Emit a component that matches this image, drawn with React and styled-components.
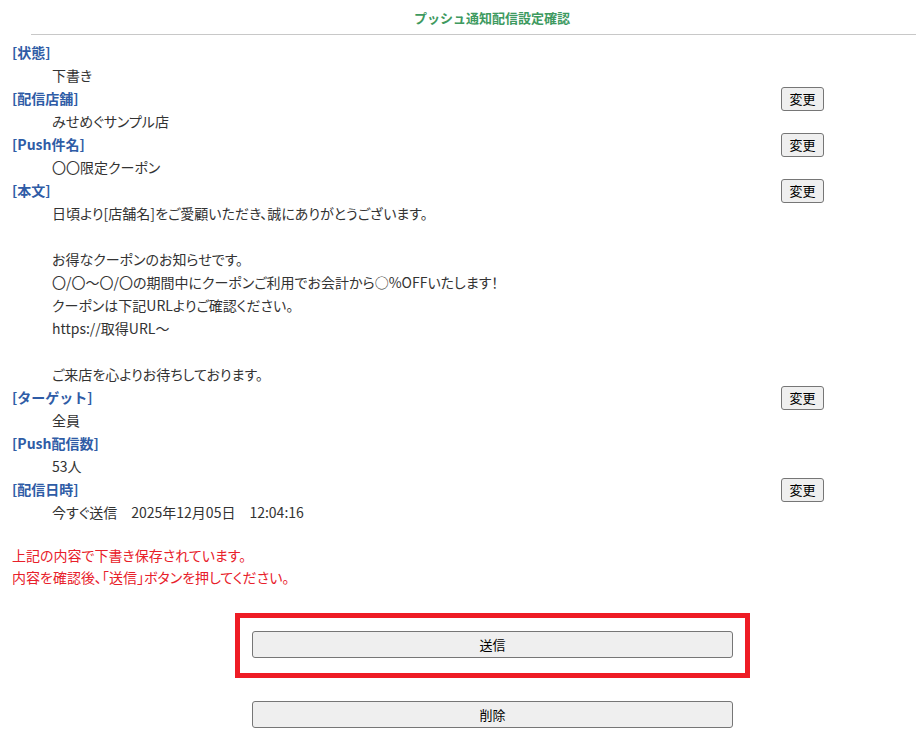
import styled, { createGlobalStyle } from "styled-components";

const GlobalStyle = createGlobalStyle`
  body {
    margin: 0;
    background: #fff;
    font-family: "Noto Sans CJK JP", "Noto Sans", sans-serif;
    color: #333;
  }
`;

// 画面タイトル
const Header = styled.div`
  margin: 0 0 6px 31px;
  padding: 8px 0 6px 37px;
  border-bottom: 1px solid #c8c8c8;
  text-align: center;
  font-size: 13px;
  font-weight: bold;
  line-height: 20px;
  color: #3e9a5f;
`;

const List = styled.div`
  width: 812px;
  padding: 0 12px;
  font-size: 14px;
  line-height: 23px;
`;

const LabelRow = styled.div`
  display: flex;
  align-items: center;
  justify-content: space-between;
  height: 23px;
`;

const Label = styled.div`
  font-weight: bold;
  color: #2f5ca6;
`;

const Value = styled.div`
  padding-left: 40px;
  white-space: pre-wrap;
  min-height: 23px;
  font-feature-settings: "palt";
`;

const SmallButton = styled.button`
  width: 43px;
  height: 24px;
  padding: 0;
  font-family: inherit;
  font-size: 13px;
  color: #000;
  background: #efefef;
  border: 1px solid #767676;
  border-radius: 3px;
`;

const Notice = styled.p`
  margin: 20px 12px 0;
  font-size: 14px;
  line-height: 22px;
  color: #e8202a;
  font-feature-settings: "palt";
`;

// 送信ボタンを囲む赤い枠
const Highlight = styled.div`
  width: 481px;
  margin: 25px 0 0 235px;
  padding: 13px 12px 15px;
  border: 5px solid #ee1c25;
`;

const WideButton = styled.button`
  display: block;
  width: 481px;
  height: 27px;
  margin-left: ${(p) => (p.$offset ? "252px" : "0")};
  margin-top: ${(p) => (p.$offset ? "23px" : "0")};
  padding: 0;
  font-family: inherit;
  font-size: 13px;
  color: #000;
  background: #efefef;
  border: 1px solid #767676;
  border-radius: 3px;
`;

const items = [
  { label: "[状態]", value: "下書き" },
  { label: "[配信店舗]", value: "みせめぐサンプル店", edit: true },
  { label: "[Push件名]", value: "〇〇限定クーポン", edit: true },
  {
    label: "[本文]",
    value:
      "日頃より[店舗名]をご愛顧いただき、誠にありがとうございます。\n\nお得なクーポンのお知らせです。\n〇/〇〜〇/〇の期間中にクーポンご利用でお会計から○%OFFいたします！\nクーポンは下記URLよりご確認ください。\nhttps://取得URL〜\n\nご来店を心よりお待ちしております。",
    edit: true,
  },
  { label: "[ターゲット]", value: "全員", edit: true },
  { label: "[Push配信数]", value: "53人" },
  { label: "[配信日時]", value: "今すぐ送信　2025年12月05日　12:04:16", edit: true },
];

const App = () => {
  return (
    <>
      <GlobalStyle />
      <Header>プッシュ通知配信設定確認</Header>
      <List>
        {items.map((item) => (
          <div key={item.label}>
            <LabelRow>
              <Label>{item.label}</Label>
              {item.edit && <SmallButton>変更</SmallButton>}
            </LabelRow>
            <Value>{item.value}</Value>
          </div>
        ))}
      </List>
      <Notice>
        上記の内容で下書き保存されています。
        <br />
        内容を確認後､｢送信｣ボタンを押してください。
      </Notice>
      <Highlight>
        <WideButton>送信</WideButton>
      </Highlight>
      <WideButton $offset>削除</WideButton>
    </>
  );
};

export default App;
